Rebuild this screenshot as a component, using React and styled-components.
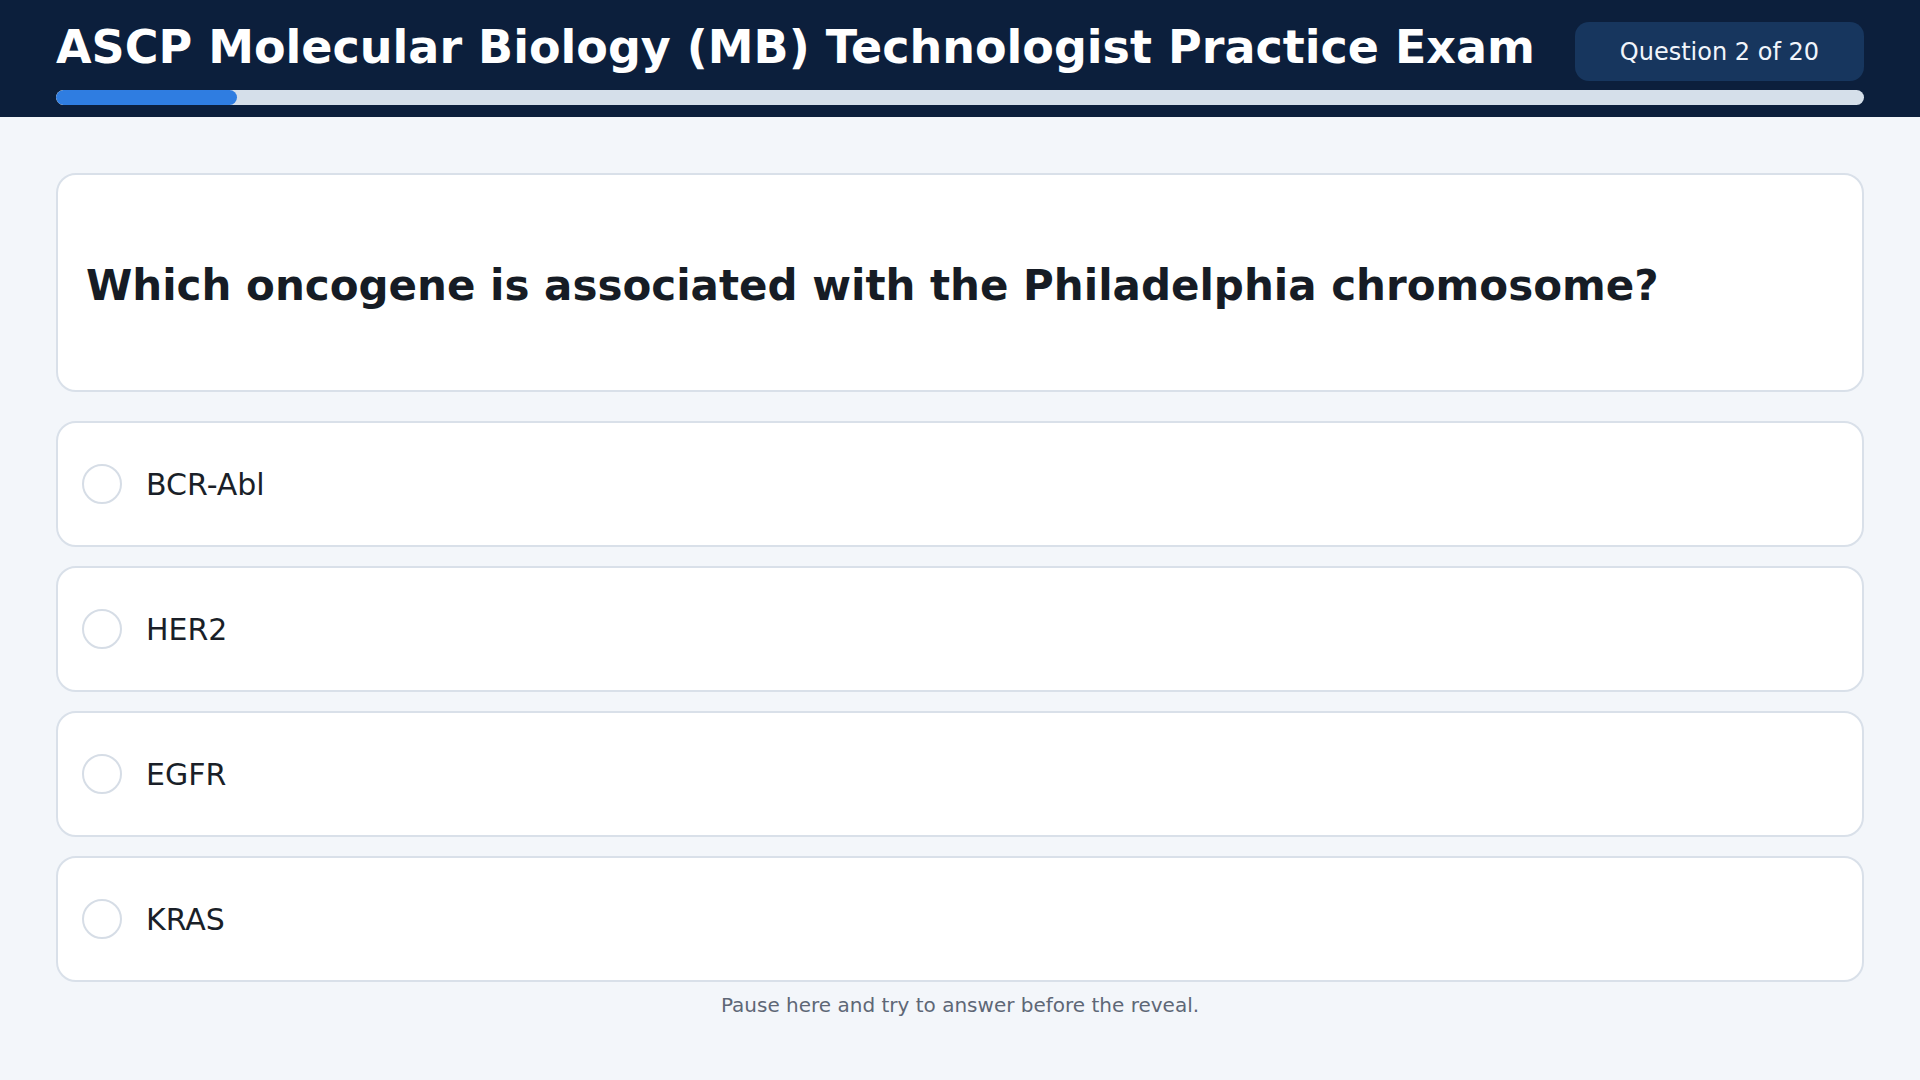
import React from "react";
import styled, { createGlobalStyle } from "styled-components";

const GlobalStyle = createGlobalStyle`
  html, body {
    margin: 0;
    padding: 0;
    background: #f3f6fa;
    font-family: "DejaVu Sans", "Noto Sans", sans-serif;
  }
  * {
    box-sizing: border-box;
  }
`;

const Header = styled.header`
  background-color: #0c1f3c;
  height: 117px;
  padding: 22px 56px 0;
  display: flex;
  flex-direction: column;
`;

const TitleRow = styled.div`
  display: flex;
  justify-content: space-between;
  align-items: center;
  height: 59px;
`;

const Title = styled.h1`
  margin: 0;
  margin-top: -10px;
  color: #ffffff;
  font-size: 46px;
  font-weight: 700;
  line-height: 1;
  white-space: nowrap;
`;

const Badge = styled.div`
  background-color: #17365e;
  color: #f1f5fb;
  border-radius: 14px;
  height: 59px;
  padding: 0 45px;
  display: flex;
  align-items: center;
  font-size: 24px;
  white-space: nowrap;
`;

const Track = styled.div`
  margin-top: 9px;
  height: 15px;
  border-radius: 8px;
  background-color: #d5dfea;
  overflow: hidden;
`;

const Fill = styled.div`
  height: 100%;
  border-radius: 8px;
  background-color: #2f7de1;
`;

const Main = styled.main`
  padding: 56px 56px 0;
  display: flex;
  flex-direction: column;
`;

const QuestionCard = styled.div`
  background: #ffffff;
  border: 2px solid #d9e0e9;
  border-radius: 20px;
  min-height: 219px;
  padding: 7px 28px 0;
  display: flex;
  align-items: center;
  margin-bottom: 29px;
`;

const QuestionText = styled.h2`
  margin: 0;
  font-size: 42px;
  font-weight: 700;
  color: #161c25;
  line-height: 1.3;
`;

const Options = styled.div`
  display: flex;
  flex-direction: column;
  gap: 19px;
`;

const Option = styled.div`
  background: #ffffff;
  border: 2px solid #d9e0e9;
  border-radius: 20px;
  height: 126px;
  padding: 0 24px;
  display: flex;
  align-items: center;
  gap: 24px;
`;

const Radio = styled.span`
  width: 40px;
  height: 40px;
  border-radius: 50%;
  border: 2px solid #d6dde6;
  flex-shrink: 0;
`;

const OptionLabel = styled.span`
  font-size: 30px;
  color: #1a1f28;
`;

const Note = styled.p`
  margin: 11px 0 0;
  text-align: center;
  font-size: 20px;
  color: #5e6776;
`;

const answers = ["BCR-Abl", "HER2", "EGFR", "KRAS"];
const current = 2;
const total = 20;

export default function App() {
  return (
    <>
      <GlobalStyle />
      <Header>
        <TitleRow>
          <Title>ASCP Molecular Biology (MB) Technologist Practice Exam</Title>
          <Badge>
            Question {current} of {total}
          </Badge>
        </TitleRow>
        <Track>
          <Fill style={{ width: `${(current / total) * 100}%` }} />
        </Track>
      </Header>
      <Main>
        <QuestionCard>
          <QuestionText>
            Which oncogene is associated with the Philadelphia chromosome?
          </QuestionText>
        </QuestionCard>
        <Options>
          {answers.map((a) => (
            <Option key={a}>
              <Radio />
              <OptionLabel>{a}</OptionLabel>
            </Option>
          ))}
        </Options>
        <Note>Pause here and try to answer before the reveal.</Note>
      </Main>
    </>
  );
}
